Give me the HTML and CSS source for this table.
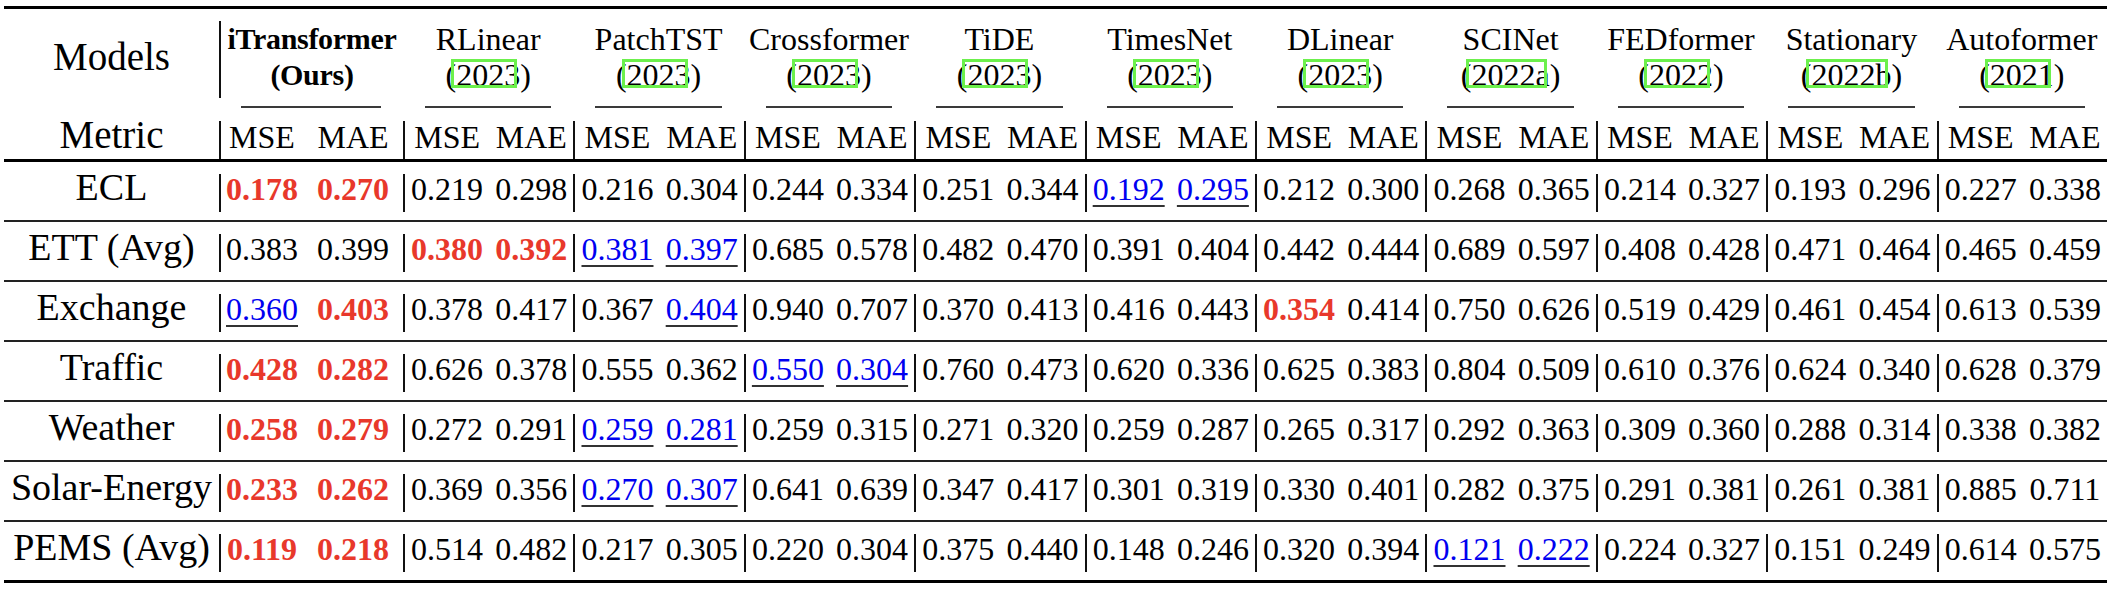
FILE: index.html
```html
<!DOCTYPE html>
<html lang="en">
<head>
    <meta charset="UTF-8">
    <meta name="viewport" content="width=device-width, initial-scale=1.0">
    <title>Forecasting results</title>
    <link rel="stylesheet" href="styles.css">
</head>
<body>

    <div class="tbl">

        <!-- Header: model names -->
        <div class="hrow">
            <div class="lab models">Models</div>
            <div class="mh ours"><div class="mn">iTransformer<br>(Ours)</div><div class="cm"></div></div>
            <div class="mh"><div class="mn">RLinear<br>(<span class="cite">2023</span>)</div><div class="cm"></div></div>
            <div class="mh"><div class="mn">PatchTST<br>(<span class="cite">2023</span>)</div><div class="cm"></div></div>
            <div class="mh"><div class="mn">Crossformer<br>(<span class="cite">2023</span>)</div><div class="cm"></div></div>
            <div class="mh"><div class="mn">TiDE<br>(<span class="cite">2023</span>)</div><div class="cm"></div></div>
            <div class="mh"><div class="mn">TimesNet<br>(<span class="cite">2023</span>)</div><div class="cm"></div></div>
            <div class="mh"><div class="mn">DLinear<br>(<span class="cite">2023</span>)</div><div class="cm"></div></div>
            <div class="mh"><div class="mn">SCINet<br>(<span class="cite">2022a</span>)</div><div class="cm"></div></div>
            <div class="mh"><div class="mn">FEDformer<br>(<span class="cite">2022</span>)</div><div class="cm"></div></div>
            <div class="mh"><div class="mn">Stationary<br>(<span class="cite">2022b</span>)</div><div class="cm"></div></div>
            <div class="mh"><div class="mn">Autoformer<br>(<span class="cite">2021</span>)</div><div class="cm"></div></div>
        </div>

        <!-- Header: metrics -->
        <div class="mrow">
            <div class="lab metric">Metric</div>
            <div class="grp ours"><span>MSE</span><span>MAE</span></div>
            <div class="grp"><span>MSE</span><span>MAE</span></div>
            <div class="grp"><span>MSE</span><span>MAE</span></div>
            <div class="grp"><span>MSE</span><span>MAE</span></div>
            <div class="grp"><span>MSE</span><span>MAE</span></div>
            <div class="grp"><span>MSE</span><span>MAE</span></div>
            <div class="grp"><span>MSE</span><span>MAE</span></div>
            <div class="grp"><span>MSE</span><span>MAE</span></div>
            <div class="grp"><span>MSE</span><span>MAE</span></div>
            <div class="grp"><span>MSE</span><span>MAE</span></div>
            <div class="grp"><span>MSE</span><span>MAE</span></div>
        </div>

        <!-- Results -->
        <div class="row">
            <div class="lab">ECL</div>
            <div class="grp ours"><span class="best">0.178</span><span class="best">0.270</span></div>
            <div class="grp"><span>0.219</span><span>0.298</span></div>
            <div class="grp"><span>0.216</span><span>0.304</span></div>
            <div class="grp"><span>0.244</span><span>0.334</span></div>
            <div class="grp"><span>0.251</span><span>0.344</span></div>
            <div class="grp"><span class="second">0.192</span><span class="second">0.295</span></div>
            <div class="grp"><span>0.212</span><span>0.300</span></div>
            <div class="grp"><span>0.268</span><span>0.365</span></div>
            <div class="grp"><span>0.214</span><span>0.327</span></div>
            <div class="grp"><span>0.193</span><span>0.296</span></div>
            <div class="grp"><span>0.227</span><span>0.338</span></div>
        </div>

        <div class="row">
            <div class="lab">ETT (Avg)</div>
            <div class="grp ours"><span>0.383</span><span>0.399</span></div>
            <div class="grp"><span class="best">0.380</span><span class="best">0.392</span></div>
            <div class="grp"><span class="second">0.381</span><span class="second">0.397</span></div>
            <div class="grp"><span>0.685</span><span>0.578</span></div>
            <div class="grp"><span>0.482</span><span>0.470</span></div>
            <div class="grp"><span>0.391</span><span>0.404</span></div>
            <div class="grp"><span>0.442</span><span>0.444</span></div>
            <div class="grp"><span>0.689</span><span>0.597</span></div>
            <div class="grp"><span>0.408</span><span>0.428</span></div>
            <div class="grp"><span>0.471</span><span>0.464</span></div>
            <div class="grp"><span>0.465</span><span>0.459</span></div>
        </div>

        <div class="row">
            <div class="lab">Exchange</div>
            <div class="grp ours"><span class="second">0.360</span><span class="best">0.403</span></div>
            <div class="grp"><span>0.378</span><span>0.417</span></div>
            <div class="grp"><span>0.367</span><span class="second">0.404</span></div>
            <div class="grp"><span>0.940</span><span>0.707</span></div>
            <div class="grp"><span>0.370</span><span>0.413</span></div>
            <div class="grp"><span>0.416</span><span>0.443</span></div>
            <div class="grp"><span class="best">0.354</span><span>0.414</span></div>
            <div class="grp"><span>0.750</span><span>0.626</span></div>
            <div class="grp"><span>0.519</span><span>0.429</span></div>
            <div class="grp"><span>0.461</span><span>0.454</span></div>
            <div class="grp"><span>0.613</span><span>0.539</span></div>
        </div>

        <div class="row">
            <div class="lab">Traffic</div>
            <div class="grp ours"><span class="best">0.428</span><span class="best">0.282</span></div>
            <div class="grp"><span>0.626</span><span>0.378</span></div>
            <div class="grp"><span>0.555</span><span>0.362</span></div>
            <div class="grp"><span class="second">0.550</span><span class="second">0.304</span></div>
            <div class="grp"><span>0.760</span><span>0.473</span></div>
            <div class="grp"><span>0.620</span><span>0.336</span></div>
            <div class="grp"><span>0.625</span><span>0.383</span></div>
            <div class="grp"><span>0.804</span><span>0.509</span></div>
            <div class="grp"><span>0.610</span><span>0.376</span></div>
            <div class="grp"><span>0.624</span><span>0.340</span></div>
            <div class="grp"><span>0.628</span><span>0.379</span></div>
        </div>

        <div class="row">
            <div class="lab">Weather</div>
            <div class="grp ours"><span class="best">0.258</span><span class="best">0.279</span></div>
            <div class="grp"><span>0.272</span><span>0.291</span></div>
            <div class="grp"><span class="second">0.259</span><span class="second">0.281</span></div>
            <div class="grp"><span>0.259</span><span>0.315</span></div>
            <div class="grp"><span>0.271</span><span>0.320</span></div>
            <div class="grp"><span>0.259</span><span>0.287</span></div>
            <div class="grp"><span>0.265</span><span>0.317</span></div>
            <div class="grp"><span>0.292</span><span>0.363</span></div>
            <div class="grp"><span>0.309</span><span>0.360</span></div>
            <div class="grp"><span>0.288</span><span>0.314</span></div>
            <div class="grp"><span>0.338</span><span>0.382</span></div>
        </div>

        <div class="row">
            <div class="lab">Solar-Energy</div>
            <div class="grp ours"><span class="best">0.233</span><span class="best">0.262</span></div>
            <div class="grp"><span>0.369</span><span>0.356</span></div>
            <div class="grp"><span class="second">0.270</span><span class="second">0.307</span></div>
            <div class="grp"><span>0.641</span><span>0.639</span></div>
            <div class="grp"><span>0.347</span><span>0.417</span></div>
            <div class="grp"><span>0.301</span><span>0.319</span></div>
            <div class="grp"><span>0.330</span><span>0.401</span></div>
            <div class="grp"><span>0.282</span><span>0.375</span></div>
            <div class="grp"><span>0.291</span><span>0.381</span></div>
            <div class="grp"><span>0.261</span><span>0.381</span></div>
            <div class="grp"><span>0.885</span><span>0.711</span></div>
        </div>

        <div class="row">
            <div class="lab">PEMS (Avg)</div>
            <div class="grp ours"><span class="best">0.119</span><span class="best">0.218</span></div>
            <div class="grp"><span>0.514</span><span>0.482</span></div>
            <div class="grp"><span>0.217</span><span>0.305</span></div>
            <div class="grp"><span>0.220</span><span>0.304</span></div>
            <div class="grp"><span>0.375</span><span>0.440</span></div>
            <div class="grp"><span>0.148</span><span>0.246</span></div>
            <div class="grp"><span>0.320</span><span>0.394</span></div>
            <div class="grp"><span class="second">0.121</span><span class="second">0.222</span></div>
            <div class="grp"><span>0.224</span><span>0.327</span></div>
            <div class="grp"><span>0.151</span><span>0.249</span></div>
            <div class="grp"><span>0.614</span><span>0.575</span></div>
        </div>

    </div>

</body>
</html>
```

FILE: styles.css
```css
body {
    margin: 0;
    background-color: #fff;
    color: #000;
    font-family: "Liberation Serif", "Times New Roman", serif;
}
.tbl {
    width: 2103px;
    margin: 6px 0 0 4px;
    border-top: 3px solid #000;
}
.hrow, .mrow, .row {
    display: grid;
    grid-template-columns: 215px 184px repeat(10, 1fr);
    align-items: start;
}

/* left column labels */
.lab {
    text-align: center;
    font-size: 38px;
    line-height: 26px;
    white-space: nowrap;
}
.lab.models {
    font-size: 39px;
    line-height: 40px;
    padding-top: 16px;
}
.lab.metric {
    font-size: 39px;
    line-height: 27px;
}

/* model names */
.hrow {
    padding-top: 12px;
}
.mn {
    text-align: center;
    font-size: 32px;
    line-height: 36px;
    padding-bottom: 5px;
    white-space: nowrap;
}
.mh.ours .mn {
    border-left: 2px solid #111;
    font-weight: bold;
    font-size: 30px;
    letter-spacing: -0.3px;
}
.cm {
    margin: 8px 22px 0;
    border-top: 2px solid #3a3a3a;
}
.cite {
    position: relative;
}
.cite::after {
    content: "";
    position: absolute;
    top: 2px;
    bottom: 5px;
    left: -5px;
    right: 3px;
    border: 3px solid #6cf04c;
}

/* value groups */
.grp {
    display: grid;
    grid-template-columns: 1fr 1fr;
    border-left: 2px solid #111;
    text-align: center;
    font-size: 32px;
    line-height: 30px;
    padding-bottom: 8px;
}
.grp.ours span {
    padding-right: 9px;
}
.mrow {
    padding-top: 13px;
    border-bottom: 3px solid #000;
}
.mrow .grp {
    line-height: 32px;
    padding-bottom: 6px;
}
.row {
    padding: 12px 0 8px;
    border-bottom: 2px solid #222;
}
.row:last-child {
    border-bottom: 3px solid #000;
}
.best {
    color: #e8382b;
    font-weight: bold;
}
.second {
    color: #0000f0;
    text-decoration: underline;
    text-decoration-color: #333;
    text-decoration-thickness: 2px;
    text-underline-offset: 5px;
}
```
